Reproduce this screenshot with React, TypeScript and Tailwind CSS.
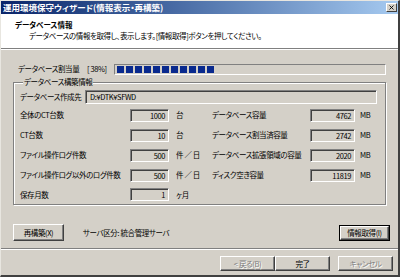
import { X } from "lucide-react";

const font = "[font-family:'Noto_Sans_CJK_JP','Noto_Sans',sans-serif] [font-feature-settings:'palt']";

// sunken read-only field
function Field({ value, w }: { value: string; w: string }) {
  return (
    <div
      className={`${w} h-[13px] border border-t-[#808080] border-l-[#808080] border-b-white border-r-white bg-[#d4d0c8] text-right pr-[3px] leading-[11px] shadow-[inset_1px_1px_0_#404040]`}
    >
      {value}
    </div>
  );
}

function Btn({
  label,
  w,
  h = "h-[15px]",
  disabled = false,
  isDefault = false,
}: {
  label: string;
  w: string;
  h?: string;
  disabled?: boolean;
  isDefault?: boolean;
}) {
  return (
    <div className={`${w} ${h} ${isDefault ? "border border-black" : ""} flex`}>
      <div
        className={`flex-1 flex items-center justify-center border border-t-white border-l-white border-b-[#404040] border-r-[#404040] shadow-[inset_-1px_-1px_0_#808080] ${
          disabled ? "text-[#808080] [text-shadow:1px_1px_0_white]" : "text-black"
        }`}
      >
        {label}
      </div>
    </div>
  );
}

const leftRows = [
  { label: "全体のCT台数", value: "1000", unit: "台" },
  { label: "CT台数", value: "10", unit: "台" },
  { label: "ファイル操作ログ件数", value: "500", unit: "件 ／ 日" },
  { label: "ファイル操作ログ以外のログ件数", value: "500", unit: "件 ／ 日" },
  { label: "保存月数", value: "1", unit: "ヶ月" },
];

const rightRows = [
  { label: "データベース容量", value: "4762" },
  { label: "データベース割当済容量", value: "2742" },
  { label: "データベース拡張領域の容量", value: "2020" },
  { label: "ディスク空き容量", value: "11819" },
];

export default function App() {
  return (
    <div
      className={`${font} w-[400px] h-[277px] bg-[#d4d0c8] text-[7.5px] tracking-[-0.4px] whitespace-nowrap text-black flex flex-col border-l border-t border-[#e8e6e0] border-r-2 border-b-2 border-r-[#404040] border-b-[#404040] overflow-hidden`}
    >
      {/* Title bar */}
      <div className="h-[13px] flex items-center justify-between bg-gradient-to-r from-[#0a246a] to-[#a6caf0] pl-[2px] pr-[1px]">
        <span className="text-white font-bold text-[8.5px] tracking-normal leading-none">運用環境保守ウィザード(情報表示・再構築)</span>
        <div className="w-[11px] h-[9px] bg-[#d4d0c8] border border-t-white border-l-white border-b-[#404040] border-r-[#404040] flex items-center justify-center">
          <X size={7} strokeWidth={3} />
        </div>
      </div>

      {/* Header */}
      <div className="h-[34px] bg-white flex flex-col pl-[14px] pt-[5px]">
        <span className="font-bold tracking-normal leading-[11px]">データベース情報</span>
        <span className="pl-[14px] leading-[11px]">
          データベースの情報を取得し、表示します。[情報取得]ボタンを押してください。
        </span>
      </div>
      <div className="border-t border-b border-t-[#808080] border-b-white" />

      {/* Body */}
      <div className="flex flex-col px-[12px]">
        <div className="mt-[13px] h-[12px] flex items-center">
          <span className="w-[74px] pl-[5px]">データベース割当量</span>
          <span className="w-[27px]">[ 38%]</span>
          <div className="flex-1 h-[11px] border border-t-[#808080] border-l-[#808080] border-b-white border-r-white flex gap-[2px] p-[1px] pl-[2px]">
            {Array.from({ length: 11 }).map((_, i) => (
              <div key={i} className="w-[7px] h-full bg-[#0a2a8e]" />
            ))}
          </div>
        </div>

        <fieldset className="mt-[2px] border border-[#808080] shadow-[1px_1px_0_white,inset_1px_1px_0_white] px-[6px] pb-0 min-w-0">
          <legend className="ml-[3px] px-[1px] leading-[10px] bg-[#d4d0c8]">データベース構築情報</legend>
          <div className="mt-[3px] h-[14px] flex items-center">
            <span className="w-[65px]">データベース作成先</span>
            <div className="w-[292px] h-[14px] border border-t-[#808080] border-l-[#808080] border-b-white border-r-white shadow-[inset_1px_1px_0_#404040] pl-[4px] leading-[12px]">
              D:¥DTK¥SFWD
            </div>
          </div>
          <div className="mt-[1px] flex">
            <div className="flex flex-col">
              {leftRows.map((r, i) => (
                <div key={r.label} className={`${i === 4 ? "h-[19px]" : "h-[20px]"} flex items-center`}>
                  <span className="w-[110px]">{r.label}</span>
                  <Field value={r.value} w="w-[39px]" />
                  <span className="w-[43px] pl-[7px]">{r.unit}</span>
                </div>
              ))}
            </div>
            <div className="flex flex-col">
              {rightRows.map((r) => (
                <div key={r.label} className="h-[20px] flex items-center">
                  <span className="w-[98px]">{r.label}</span>
                  <Field value={r.value} w="w-[45px]" />
                  <span className="pl-[5px]">MB</span>
                </div>
              ))}
            </div>
          </div>
        </fieldset>

        <div className="mt-[19px] flex items-center">
          <Btn label="再構築(X)" w="w-[51px]" h="h-[17px]" />
          <span className="ml-[19px]">サーバ区分: 統合管理サーバ</span>
          <div className="ml-auto mr-[-4px]">
            <Btn label="情報取得(I)" w="w-[51px]" h="h-[16px]" isDefault />
          </div>
        </div>
      </div>

      <div className="mt-[7px] border-t border-b border-t-[#808080] border-b-white" />

      {/* Footer */}
      <div className="mt-[6px] flex justify-end pr-[5px]">
        <Btn label="< 戻る(B)" w="w-[55px]" disabled />
        <Btn label="完了" w="w-[55px]" />
        <div className="w-[8px]" />
        <Btn label="キャンセル" w="w-[55px]" disabled />
      </div>
    </div>
  );
}
